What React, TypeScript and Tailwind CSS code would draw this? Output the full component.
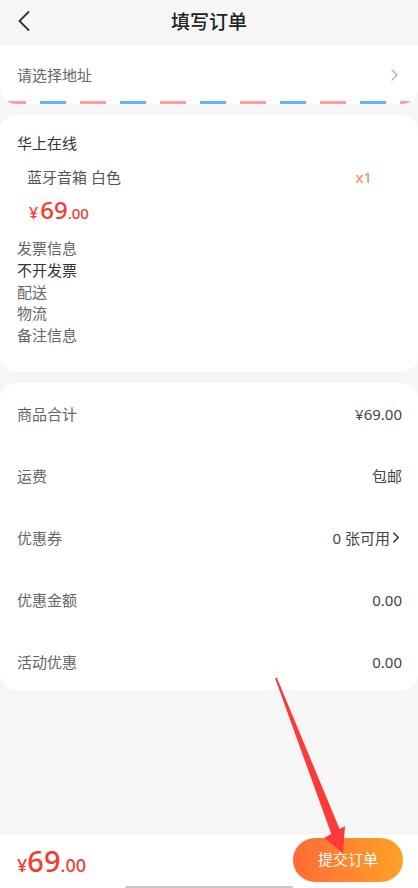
import React from 'react';

const font = { fontFamily: '"Noto Sans", "Noto Sans CJK SC", sans-serif' };

const rows = [
  { label: '商品合计', value: '¥69.00' },
  { label: '运费', value: '包邮' },
  { label: '优惠券', value: '0 张可用', arrow: true },
  { label: '优惠金额', value: '0.00' },
  { label: '活动优惠', value: '0.00' },
];

function Chevron({ className, stroke = '#aaa', width = 1.5 }: { className?: string; stroke?: string; width?: number }) {
  return (
    <svg viewBox="0 0 8 14" className={className} fill="none">
      <path d="M1 1l6 6-6 6" stroke={stroke} strokeWidth={width} strokeLinecap="round" strokeLinejoin="round" />
    </svg>
  );
}

export default function App() {
  return (
    <div style={font} className="relative flex h-[888px] w-full flex-col overflow-hidden bg-[#f6f6f6]">
      {/* header */}
      <div className="relative flex h-[45px] shrink-0 items-center justify-center">
        <svg viewBox="0 0 12 20" className="absolute left-[18px] top-[11px] h-[20px] w-[12px]" fill="none">
          <path d="M10.5 1L1.5 10l9 9" stroke="#333" strokeWidth="1.8" strokeLinecap="round" strokeLinejoin="round" />
        </svg>
        <h1 className="text-[19px] font-medium text-[#222]">填写订单</h1>
      </div>

      {/* address */}
      <div className="relative mt-[1px] flex h-[58px] shrink-0 items-center justify-between overflow-hidden rounded-b-[16px] bg-white px-[17px]">
        <span className="text-[15px] text-[#666]">请选择地址</span>
        <Chevron className="mr-[3px] h-[12px] w-[7px]" />
        <div className="absolute bottom-0 left-0 right-0 h-[3px] bg-[repeating-linear-gradient(90deg,#ff9d9d_0_26px,transparent_26px_40px,#5bb9ff_40px_66px,transparent_66px_80px)]" />
      </div>

      {/* shop / product */}
      <div className="mt-[11px] shrink-0 rounded-[16px] bg-white pb-[25px] pl-[17px] pr-[16px] pt-[17px]">
        <div className="text-[15px] leading-[22px] text-[#333]">华上在线</div>
        <div className="mt-[12px] flex items-center justify-between pl-[10px] pr-[30px] leading-[22px]">
          <span className="text-[15px] text-[#555]">蓝牙音箱 白色</span>
          <span className="text-[15px] text-[#ff7d4d]">x1</span>
        </div>
        <div className="mt-[8px] flex h-[28px] items-baseline pl-[12px] font-medium text-[#f73a2c]">
          <span className="text-[16px]">¥</span>
          <span className="ml-[2px] text-[24px] leading-[28px]">69</span>
          <span className="text-[15px]">.00</span>
        </div>
        <div className="mt-[14px] text-[15px] leading-[21.75px] text-[#666]">
          <div>发票信息</div>
          <div className="text-[#333]">不开发票</div>
          <div>配送</div>
          <div>物流</div>
          <div>备注信息</div>
        </div>
      </div>

      {/* summary */}
      <div className="mt-[11px] h-[307px] shrink-0 overflow-hidden rounded-[16px] bg-white pl-[17px] pr-[16px]">
        {rows.map((r) => (
          <div key={r.label} className="flex h-[62px] items-center justify-between">
            <span className="text-[15px] text-[#666]">{r.label}</span>
            <span className="flex items-center text-[15px] text-[#444]">
              {r.value}
              {r.arrow && <Chevron className="ml-[3px] mr-[3px] h-[11px] w-[6px]" stroke="#333" width={2} />}
            </span>
          </div>
        ))}
      </div>

      <div className="flex-1" />

      {/* bottom bar */}
      <div className="relative flex h-[53px] shrink-0 items-center justify-between bg-white pl-[17px] pr-[15px]">
        <div className="flex items-baseline font-medium text-[#f73a2c]">
          <span className="text-[18px]">¥</span>
          <span className="text-[29px] leading-[34px]">69</span>
          <span className="text-[18px]">.00</span>
        </div>
        <button className="mb-[4px] flex h-[44px] w-[110px] items-center justify-center rounded-full bg-gradient-to-r from-[#ff6a33] to-[#ffa125] text-[15px] text-white">
          提交订单
        </button>
        <div className="absolute bottom-0 left-[125px] h-[2px] w-[168px] rounded-full bg-[#c8c8c8]" />
      </div>

      {/* annotation arrow */}
      <svg className="pointer-events-none absolute left-0 top-0 h-[888px] w-[418px]" viewBox="0 0 418 888">
        <polygon points="275,678 277,678 340,830 332,836" fill="#fd3a3a" />
        <polygon points="324,838 345,826 343,853" fill="#fd3a3a" />
      </svg>
    </div>
  );
}
